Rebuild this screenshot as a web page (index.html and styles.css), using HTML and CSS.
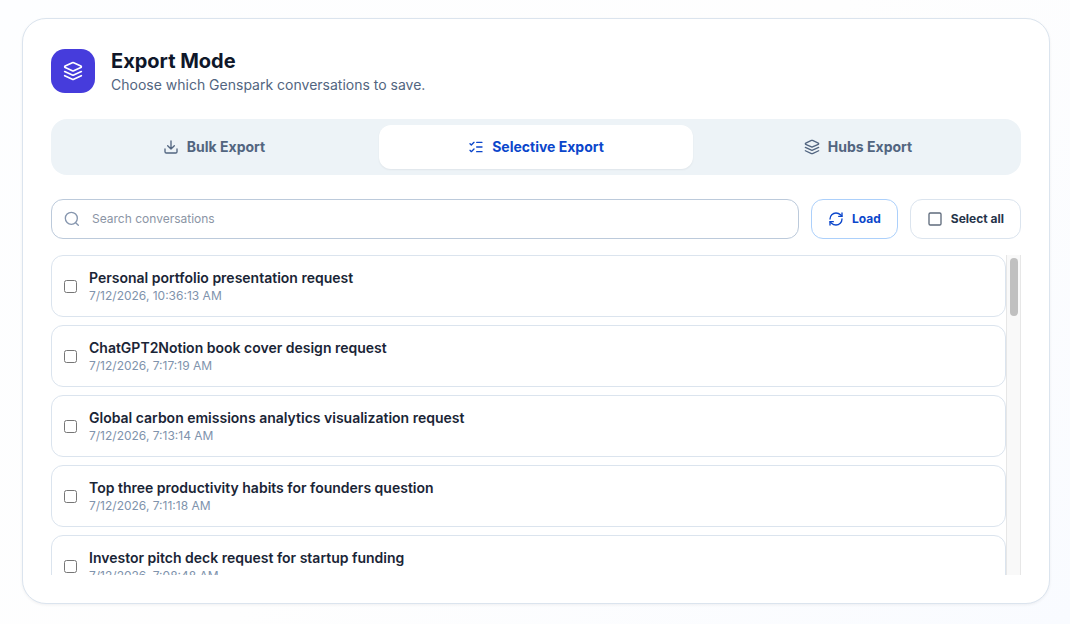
FILE: index.html
```html
<!DOCTYPE html>
<html lang="en">
<head>
    <meta charset="UTF-8">
    <meta name="viewport" content="width=device-width, initial-scale=1.0">
    <title>Export Mode</title>
    <link rel="stylesheet" href="styles.css">
</head>
<body>
    <svg class="sprite">
        <symbol id="layers" viewBox="0 0 24 24">
            <path d="m12.830 2.180a2 2 0 0 0-1.660 0L2.600 6.080a1 1 0 0 0 0 1.830l8.580 3.910a2 2 0 0 0 1.660 0l8.580-3.900a1 1 0 0 0 0-1.830Z"/>
            <path d="m22 12.650-9.170 4.160a2 2 0 0 1-1.660 0L2 12.650"/>
            <path d="m22 17.650-9.170 4.160a2 2 0 0 1-1.660 0L2 17.650"/>
        </symbol>
    </svg>
    <main class="card">
        <header class="card-header">
            <div class="logo">
                <svg class="icon icon-large"><use href="#layers"/></svg>
            </div>
            <div>
                <h1>Export Mode</h1>
                <p class="subtitle">Choose which Genspark conversations to save.</p>
            </div>
        </header>

        <div class="tabs" role="tablist">
            <button class="tab" type="button" role="tab">
                <svg class="icon" viewBox="0 0 24 24">
                    <path d="M12 3v12M7 10l5 5 5-5M21 15v4a2 2 0 0 1-2 2H5a2 2 0 0 1-2-2v-4"/>
                </svg>
                Bulk Export
            </button>
            <button class="tab active" type="button" role="tab" aria-selected="true">
                <svg class="icon" viewBox="0 0 24 24">
                    <path d="M3 7l2 2 4-4M3 17l2 2 4-4M13 5h8M13 12h8M13 19h8"/>
                </svg>
                Selective Export
            </button>
            <button class="tab" type="button" role="tab">
                <svg class="icon"><use href="#layers"/></svg>
                Hubs Export
            </button>
        </div>

        <div class="toolbar">
            <label class="search">
                <svg class="icon" viewBox="0 0 24 24">
                    <circle cx="11" cy="11" r="9"/>
                    <path d="m21.500 21.500-4-4"/>
                </svg>
                <input type="text" placeholder="Search conversations" aria-label="Search conversations">
            </label>
            <button class="btn btn-load" type="button">
                <svg class="icon" viewBox="0 0 24 24">
                    <path d="M3 12a9 9 0 0 1 9-9 9.750 9.750 0 0 1 6.740 2.740L21 8"/>
                    <path d="M21 3v5h-5"/>
                    <path d="M21 12a9 9 0 0 1-9 9 9.750 9.750 0 0 1-6.740-2.740L3 16"/>
                    <path d="M8 16H3v5"/>
                </svg>
                Load
            </button>
            <button class="btn" type="button">
                <svg class="icon icon-box" viewBox="0 0 24 24">
                    <rect x="3" y="3" width="18" height="18" rx="2"/>
                </svg>
                Select all
            </button>
        </div>

        <div class="list-wrap">
            <div class="list">
                <label class="row">
                    <input type="checkbox">
                    <span class="row-text">
                        <span class="row-title">Personal portfolio presentation request</span>
                        <span class="row-date">7/12/2026, 10:36:13 AM</span>
                    </span>
                </label>
                <label class="row">
                    <input type="checkbox">
                    <span class="row-text">
                        <span class="row-title">ChatGPT2Notion book cover design request</span>
                        <span class="row-date">7/12/2026, 7:17:19 AM</span>
                    </span>
                </label>
                <label class="row">
                    <input type="checkbox">
                    <span class="row-text">
                        <span class="row-title">Global carbon emissions analytics visualization request</span>
                        <span class="row-date">7/12/2026, 7:13:14 AM</span>
                    </span>
                </label>
                <label class="row">
                    <input type="checkbox">
                    <span class="row-text">
                        <span class="row-title">Top three productivity habits for founders question</span>
                        <span class="row-date">7/12/2026, 7:11:18 AM</span>
                    </span>
                </label>
                <label class="row">
                    <input type="checkbox">
                    <span class="row-text">
                        <span class="row-title">Investor pitch deck request for startup funding</span>
                        <span class="row-date">7/12/2026, 7:08:48 AM</span>
                    </span>
                </label>
            </div>
            <div class="track">
                <div class="thumb"></div>
            </div>
        </div>
    </main>
</body>
</html>
```
FILE: styles.css
```css
* {
    box-sizing: border-box;
}
body {
    margin: 0;
    min-height: 100vh;
    padding: 18px 20px 20px 22px;
    background: linear-gradient(135deg, #fdfeff 0%, #fefefe 50%, #f9fbff 100%);
    font-family: Inter, sans-serif;
    color: #0f172a;
}
.sprite {
    display: none;
}
.card {
    background: #fff;
    border: 1px solid #dbe4ee;
    border-radius: 24px;
    padding: 28px;
    box-shadow: 0 1px 3px rgba(15, 23, 42, 0.06);
}
.card-header {
    display: flex;
    align-items: center;
    gap: 16px;
}
.logo {
    display: flex;
    align-items: center;
    justify-content: center;
    width: 44px;
    height: 44px;
    border-radius: 14px;
    background: #463cdc;
    color: #fff;
}
.icon {
    width: 16px;
    height: 16px;
    flex-shrink: 0;
    fill: none;
    stroke: currentColor;
    stroke-width: 2;
    stroke-linecap: round;
    stroke-linejoin: round;
}
.icon-large {
    width: 20px;
    height: 20px;
}
h1 {
    margin: 0;
    font-size: 20px;
    line-height: 28px;
    font-weight: 700;
}
.subtitle {
    margin: 0;
    font-size: 14px;
    line-height: 20px;
    color: #526580;
}
.tabs {
    display: flex;
    gap: 8px;
    margin-top: 24px;
    padding: 6px;
    border-radius: 16px;
    background: #edf3f7;
}
.tab {
    flex: 1;
    display: flex;
    align-items: center;
    justify-content: center;
    gap: 8px;
    height: 44px;
    border: none;
    border-radius: 12px;
    background: none;
    color: #526580;
    font-family: inherit;
    font-size: 14px;
    line-height: 20px;
    font-weight: 700;
}
.tab.active {
    background: #fff;
    color: #0b46cb;
    box-shadow: 0 1px 2px rgba(15, 23, 42, 0.06);
}
.toolbar {
    display: flex;
    gap: 12px;
    margin-top: 24px;
}
.search {
    flex: 1;
    display: flex;
    align-items: center;
    gap: 12px;
    height: 40px;
    padding: 0 12px;
    border: 1px solid #bccadb;
    border-radius: 12px;
    color: #8696ae;
}
.search input {
    flex: 1;
    min-width: 0;
    height: 16px;
    padding: 0;
    border: none;
    outline: none;
    background: none;
    font-family: inherit;
    font-size: 12px;
    line-height: 16px;
}
.search input::placeholder {
    color: #8b95a5;
}
.btn {
    display: flex;
    align-items: center;
    gap: 8px;
    height: 40px;
    padding: 0 16px;
    border: 1px solid #dbe4ee;
    border-radius: 12px;
    background: #fff;
    color: #263449;
    font-family: inherit;
    font-size: 12px;
    line-height: 16px;
    font-weight: 700;
}
.btn-load {
    border-color: #acd0fb;
    color: #0b46cb;
}
.icon-box {
    color: #5f6b7c;
}
.list-wrap {
    display: flex;
    height: 320px;
    margin-top: 16px;
}
.list {
    flex: 1;
    display: flex;
    flex-direction: column;
    gap: 8px;
    overflow: hidden;
}
.row {
    display: flex;
    flex-shrink: 0;
    align-items: center;
    gap: 12px;
    padding: 12px;
    border: 1px solid #dbe4ee;
    border-radius: 12px;
}
.row input {
    width: 13px;
    height: 13px;
    margin: 0;
}
.row-text {
    display: flex;
    flex-direction: column;
}
.row-title {
    font-size: 14px;
    line-height: 20px;
    font-weight: 600;
    color: #1a2536;
}
.row-date {
    font-size: 12px;
    line-height: 16px;
    color: #8093ac;
}
.track {
    width: 15px;
    padding: 3px;
    border: solid #e7e7e7;
    border-width: 0 1px;
    background: #f9f9f9;
}
.thumb {
    width: 8px;
    height: 58px;
    border-radius: 4px;
    background: #c0c0c0;
}
```
